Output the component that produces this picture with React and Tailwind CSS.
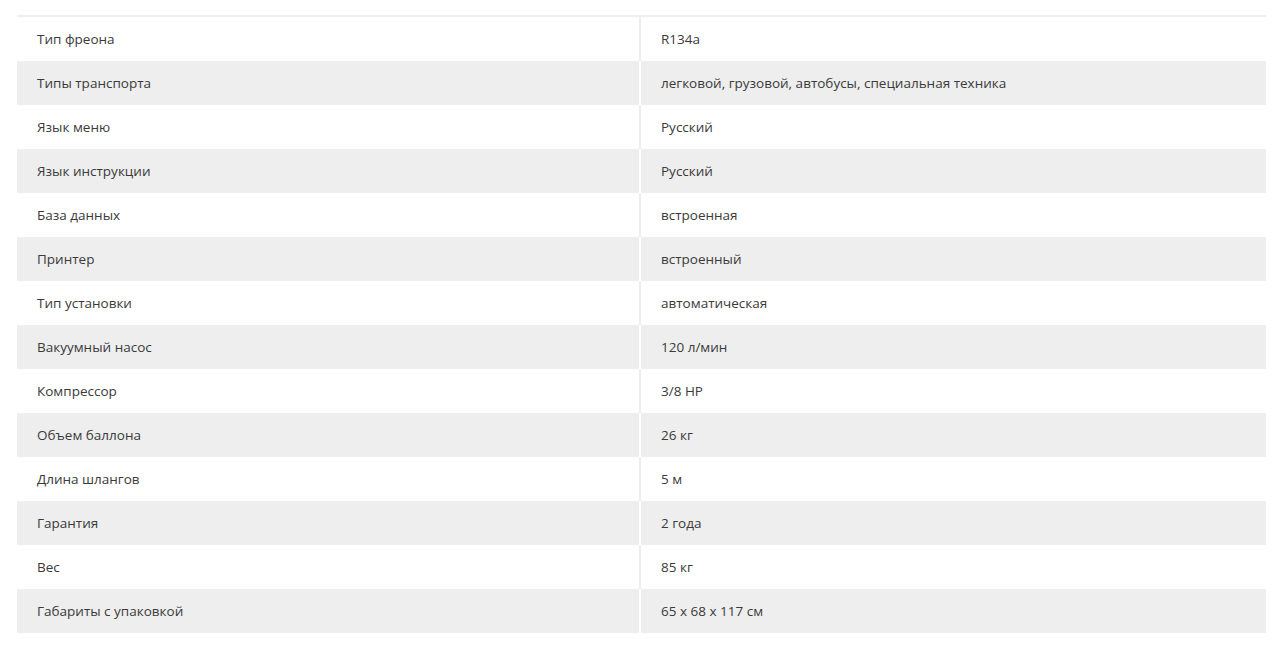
const rows = [
  ["Тип фреона", "R134a"],
  ["Типы транспорта", "легковой, грузовой, автобусы, специальная техника"],
  ["Язык меню", "Русский"],
  ["Язык инструкции", "Русский"],
  ["База данных", "встроенная"],
  ["Принтер", "встроенный"],
  ["Тип установки", "автоматическая"],
  ["Вакуумный насос", "120 л/мин"],
  ["Компрессор", "3/8 HP"],
  ["Объем баллона", "26 кг"],
  ["Длина шлангов", "5 м"],
  ["Гарантия", "2 года"],
  ["Вес", "85 кг"],
  ["Габариты с упаковкой", "65 x 68 x 117 см"],
];

export default function App() {
  return (
    <div className="min-h-screen bg-white pt-[15px] pl-[17px] pr-[15px]" style={{ fontFamily: '"Open Sans", sans-serif' }}>
      <div className="border-t-2 border-[#eeeeee]">
        {rows.map(([name, value], i) => {
          const odd = i % 2 === 1;
          return (
            <div
              key={name}
              className={
                odd
                  ? "flex h-[44px] items-center bg-[#eeeeee] text-[13.5px] text-[#3a3a3a]"
                  : "flex h-[44px] items-center bg-white text-[13.5px] text-[#3a3a3a]"
              }
            >
              <div
                className={
                  odd
                    ? "flex h-full w-[624px] items-center border-r-2 border-white pl-5"
                    : "flex h-full w-[624px] items-center border-r-2 border-[#eeeeee] pl-5"
                }
              >
                {name}
              </div>
              <div className="flex h-full flex-1 items-center pl-5">{value}</div>
            </div>
          );
        })}
      </div>
    </div>
  );
}
